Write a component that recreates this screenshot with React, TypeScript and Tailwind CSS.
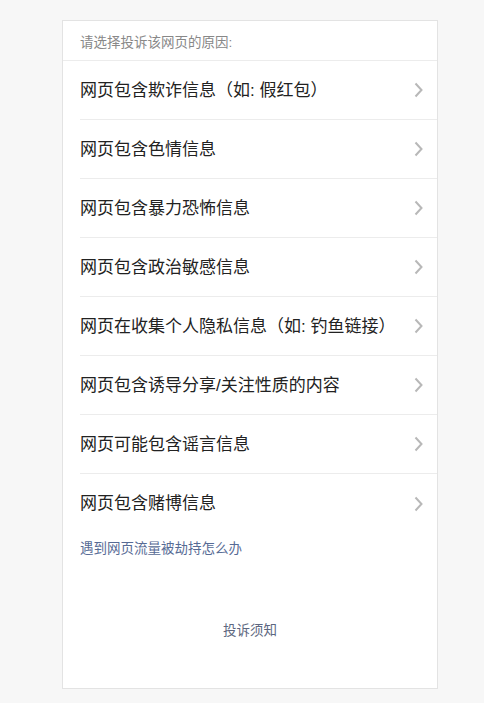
import React from "react";

const items = [
  "网页包含欺诈信息（如: 假红包）",
  "网页包含色情信息",
  "网页包含暴力恐怖信息",
  "网页包含政治敏感信息",
  "网页在收集个人隐私信息（如: 钓鱼链接）",
  "网页包含诱导分享/关注性质的内容",
  "网页可能包含谣言信息",
  "网页包含赌博信息",
];

function Chevron() {
  return (
    <svg width="9" height="16" viewBox="0 0 9 16" className="shrink-0">
      <path d="M1.5 1.5 L7.5 8 L1.5 14.5" fill="none" stroke="#b8b8b8" strokeWidth="2" />
    </svg>
  );
}

export default function App() {
  return (
    <div
      className="min-h-[703px] bg-[#f7f7f7] pt-[20px] pb-[14px]"
      style={{ fontFamily: '"Liberation Sans", "Noto Sans CJK SC", sans-serif' }}
    >
      <div className="ml-[62px] w-[376px] h-[669px] bg-white border border-[#e3e3e3] flex flex-col">
        <div className="pl-[17px] h-[40px] flex items-center text-[13.5px] text-[#888888] border-b border-[#ececec]">
          <span className="pt-[6px]">请选择投诉该网页的原因:</span>
        </div>
        <div className="pl-[17px]">
          {items.map((t, i) => (
            <div
              key={i}
              className={
                "h-[59px] flex items-center justify-between pr-[14px] text-[17px] text-[#222222] " +
                (i < items.length - 1 ? "border-b border-[#ececec]" : "")
              }
            >
              <span className="pt-[1px]">{t}</span>
              <Chevron />
            </div>
          ))}
        </div>
        <div className="pl-[17px] mt-[6px] text-[13.5px] text-[#576b95]">遇到网页流量被劫持怎么办</div>
        <div className="mt-[62px] text-center text-[13.5px] text-[#5d6780]">投诉须知</div>
      </div>
    </div>
  );
}
